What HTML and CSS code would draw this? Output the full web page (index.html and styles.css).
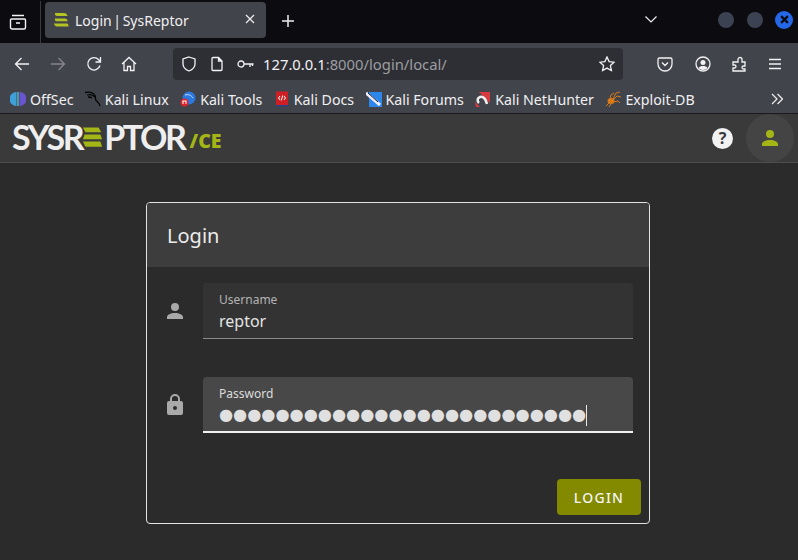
FILE: index.html
```html
<!DOCTYPE html>
<html lang="en">
<head>
    <meta charset="UTF-8">
    <title>Login | SysReptor</title>
    <link rel="stylesheet" href="styles.css">
</head>
<body>
    <div class="tab-strip">
        <svg class="tab-view" viewBox="0 0 18 16" width="18" height="16"><path d="M3 1.500h12M2.500 5h13a1 1 0 0 1 1 1v7.500a1.500 1.500 0 0 1-1.500 1.500H3a1.500 1.500 0 0 1-1.500-1.500V6a1 1 0 0 1 1-1zM7 9h4"/></svg>
        <div class="strip-sep"></div>
        <div class="tab">
            <svg class="tab-icon" viewBox="0 0 16 16" width="16" height="16"><path d="M2 1h9c2 0 3 1 3.500 3H4C3 4 1.500 3 2 1zM2 6.500h10c1.500 0 2.500 1 2.500 2.800H3.500C2.500 9.300 1.500 8 2 6.500zM1 11.500h13c1 0 1.500 1 1.500 3H4c-1.500 0-3-1.500-3-3z"/></svg>
            <span class="tab-title">Login | SysReptor</span>
            <svg class="tab-close" viewBox="0 0 10 10" width="10" height="10"><path d="M1 1l8 8M9 1l-8 8"/></svg>
        </div>
        <svg class="new-tab" viewBox="0 0 12 12" width="12" height="12"><path d="M6 0v12M0 6h12"/></svg>
        <svg class="tab-list" viewBox="0 0 12 7" width="12" height="7"><path d="M.5.500L6 6l5.500-5.500"/></svg>
        <div class="win-btn"></div>
        <div class="win-btn"></div>
        <div class="win-btn win-close"><svg viewBox="0 0 8 8" width="9" height="9"><path d="M1 1l6 6M7 1L1 7"/></svg></div>
    </div>

    <div class="nav-bar">
        <svg class="nav-icon nav-back" viewBox="0 0 16 16" width="16" height="16"><path d="M15 8H1.500M7.500 2l-6 6 6 6"/></svg>
        <svg class="nav-icon nav-forward" viewBox="0 0 16 16" width="16" height="16"><path d="M1 8h13.500M8.500 2l6 6-6 6"/></svg>
        <svg class="nav-icon nav-reload" viewBox="0 0 16 16" width="16" height="16"><path d="M14 9.500A6.200 6.200 0 1 1 12.500 3.500L14.500 6M14.500 1v5h-5"/></svg>
        <svg class="nav-icon nav-home" viewBox="0 0 16 16" width="16" height="16"><path d="M1 8l7-6.500L15 8M3 6.500V14.500h3.500v-4h3v4H13V6.500"/></svg>
        <div class="url-bar">
            <svg class="nav-icon" viewBox="0 0 16 16" width="16" height="16"><path d="M8 1l6 2v5c0 3.500-3 5.800-6 7-3-1.200-6-3.500-6-7V3z"/></svg>
            <svg class="nav-icon url-page" viewBox="0 0 12 16" width="12" height="16"><path d="M1 2.500a1 1 0 0 1 1-1h5.500l3.500 3.500v8.500a1 1 0 0 1-1 1H2a1 1 0 0 1-1-1zM7.500 1.500V5H11"/></svg>
            <svg class="nav-icon url-key" viewBox="0 0 17 10" width="17" height="10"><circle cx="4" cy="5" r="3"/><path d="M7 5h9.500M13 5v3M15.500 5v2"/></svg>
            <span class="url-text">127.0.0.1<span class="url-dim">:8000/login/local/</span></span>
            <svg class="nav-icon url-star" viewBox="0 0 16 16" width="16" height="16"><path d="M8 1l2.100 4.600 5 .6-3.700 3.400 1 5L8 12.100l-4.400 2.500 1-5L.9 6.200l5-.6z"/></svg>
        </div>
        <svg class="nav-icon nav-pocket" viewBox="0 0 16 16" width="16" height="16"><path d="M2.500 2h11A1.500 1.500 0 0 1 15 3.500V8A7 7 0 0 1 1 8V3.500A1.500 1.500 0 0 1 2.500 2zM5 6.500L8 9.500l3-3"/></svg>
        <svg class="nav-icon nav-account" viewBox="0 0 16 16" width="16" height="16"><circle cx="8" cy="8" r="7"/><circle class="icon-fill" cx="8" cy="6.500" r="2.500"/><path class="icon-fill" d="M3.500 12c1-1.500 2.500-2 4.500-2s3.500.5 4.500 2c-1 1.200-2.600 2-4.500 2s-3.500-.8-4.500-2z"/></svg>
        <svg class="nav-icon nav-ext" viewBox="0 0 16 16" width="16" height="16"><path d="M2 6h5V3.500a2 2 0 0 1 4 0V6h3v4h-1.500a1.500 1.500 0 0 0 0 3H14v2H2v-3h1.500a1.500 1.500 0 0 0 0-3H2z"/></svg>
        <svg class="nav-icon nav-menu" viewBox="0 0 14 12" width="14" height="12"><path d="M1 1.500h12M1 6h12M1 10.500h12"/></svg>
    </div>

    <div class="bookmarks">
        <div class="bookmark">
            <svg viewBox="0 0 16 16" width="16" height="16"><path fill="#3f9fd8" d="M6.500 1A7 7 0 0 0 6.500 15z"/><path fill="#6a55d0" d="M9.500 1a7 7 0 0 1 0 14z"/><path fill="#4fc6c8" d="M7.300 1h1.400v14H7.300z"/></svg>
            <span>OffSec</span>
        </div>
        <div class="bookmark">
            <svg viewBox="0 0 16 16" width="16" height="16"><path fill="none" stroke="#050505" stroke-width="1.300" d="M0 1.500c4-1 8 0 10 3 1 2 0 3.500 1 5 1 1 3 2 4 5.500M2 4c3-1 6 0 8 2M3 6c1 0 3 0 4 1"/></svg>
            <span>Kali Linux</span>
        </div>
        <div class="bookmark">
            <svg viewBox="0 0 16 16" width="16" height="16"><circle cx="9" cy="7" r="6.500" fill="#2a78e0"/><path fill="none" stroke="#cfe2fa" d="M5 4c3-1 6 0 8 3"/><circle cx="4.500" cy="11.500" r="4" fill="#d8262c"/><path stroke="#fff" d="M3 10v3M6 10v3M2.500 10h4"/></svg>
            <span>Kali Tools</span>
        </div>
        <div class="bookmark">
            <svg viewBox="0 0 16 16" width="16" height="16"><path fill="#2a3f86" d="M2 13h12v2.500H2z"/><path fill="#cf1f25" d="M2 .5h12V14H2z"/><path fill="none" stroke="#fff" d="M6 5L4.500 7 6 9M10 5l1.500 2L10 9M8.700 4.500L7.300 9.500"/></svg>
            <span>Kali Docs</span>
        </div>
        <div class="bookmark">
            <svg viewBox="0 0 16 16" width="16" height="16"><path fill="#2d86ea" d="M3 1h13v15H3z"/><path fill="none" stroke="#eef" stroke-width="3" d="M0 2l14 12"/><path fill="none" stroke="#222" d="M2 2l10 9"/></svg>
            <span>Kali Forums</span>
        </div>
        <div class="bookmark">
            <svg viewBox="0 0 16 16" width="16" height="16"><path fill="#d93a40" d="M4 1h11v11z"/><path fill="#d93a40" d="M0 11l5 5H1z"/><path fill="none" stroke="#eee" stroke-width="2.500" d="M12 13C11 8 8 5 5 6c-3 1-3 4-1 6"/></svg>
            <span>Kali NetHunter</span>
        </div>
        <div class="bookmark">
            <svg viewBox="0 0 16 16" width="16" height="16"><ellipse cx="6" cy="10" rx="3.500" ry="3" fill="#d87a18"/><path fill="none" stroke="#d87a18" d="M8 8l3-6 4-1M8 9l4-4 4 1M8 11l5-1 2 2M5 7l1-3 3-2M4 12l-3 3M6 13l-2 3"/></svg>
            <span>Exploit-DB</span>
        </div>
        <svg class="bookmark-more" viewBox="0 0 12 12" width="12" height="12"><path d="M1 1l5 5-5 5M6.500 1l5 5-5 5"/></svg>
    </div>

    <header class="app-bar">
        <div class="logo">
            <span>SYSR</span>
            <svg class="logo-e" viewBox="0 0 24 24" width="21" height="24"><path d="M1 1h18l3 5.500H4zM3 9h18l2 5.500H1zM1 17h20l2 6H4z"/></svg>
            <span>PTOR</span>
            <span class="logo-ce">/CE</span>
        </div>
        <div class="help-icon">?</div>
        <div class="user-btn">
            <svg viewBox="0 0 24 24" width="24" height="24"><path d="M12 4a4 4 0 1 1 0 8 4 4 0 0 1 0-8zm0 10c4.400 0 8 1.800 8 4v2H4v-2c0-2.200 3.600-4 8-4z"/></svg>
        </div>
    </header>

    <main class="page">
        <div class="card">
            <div class="card-title">Login</div>
            <div class="card-body">
                <div class="field-row">
                    <svg class="field-icon" viewBox="0 0 24 24" width="24" height="24"><path d="M12 4a4 4 0 1 1 0 8 4 4 0 0 1 0-8zm0 10c4.400 0 8 1.800 8 4v2H4v-2c0-2.200 3.600-4 8-4z"/></svg>
                    <div class="field">
                        <div class="field-label">Username</div>
                        <div class="field-value">reptor</div>
                    </div>
                </div>
                <div class="field-row">
                    <svg class="field-icon" viewBox="0 0 24 24" width="24" height="24"><path d="M12 17a2 2 0 1 0 0-4 2 2 0 0 0 0 4zm6-9a2 2 0 0 1 2 2v10a2 2 0 0 1-2 2H6a2 2 0 0 1-2-2V10a2 2 0 0 1 2-2h1V6a5 5 0 0 1 10 0v2h1zM12 3a3 3 0 0 0-3 3v2h6V6a3 3 0 0 0-3-3z"/></svg>
                    <div class="field field-focused">
                        <div class="field-label">Password</div>
                        <div class="field-dots">●●●●●●●●●●●●●●●●●●●●●●●●●●<span class="caret"></span></div>
                    </div>
                </div>
            </div>
            <div class="card-actions">
                <button class="login-btn">LOGIN</button>
            </div>
        </div>
    </main>
</body>
</html>
```

FILE: styles.css
```css
html, body {
    margin: 0;
    height: 100%;
}
body {
    width: 798px;
    height: 560px;
    overflow: hidden;
    display: flex;
    flex-direction: column;
    background: #2b2b2b;
    font-family: "Noto Sans", sans-serif;
    color: #e6e6e6;
}
svg {
    flex: none;
    display: block;
}

/* browser chrome */
.tab-strip {
    height: 43px;
    flex: none;
    display: flex;
    align-items: center;
    background: #0c0c10;
    box-sizing: border-box;
    padding-left: 9px;
}
.tab-view path {
    fill: none;
    stroke: #f4f4f5;
    stroke-width: 1.4;
}
.strip-sep {
    width: 1px;
    height: 42px;
    background: #3a3a40;
    margin-left: 13px;
    margin-right: 4px;
}
.tab {
    width: 221px;
    height: 36px;
    margin-top: -3px;
    box-sizing: border-box;
    padding: 0 12px 0 8px;
    border-radius: 4px;
    background: #42444b;
    display: flex;
    align-items: center;
    font-size: 14px;
    word-spacing: -2px;
    color: #f0f0f2;
}
.tab-icon {
    margin-right: 6px;
}
.tab-icon path {
    fill: #b3c322;
}
.tab-title {
    flex: 1;
}
.tab-close path, .new-tab path, .tab-list path {
    fill: none;
    stroke: #eeeef0;
    stroke-width: 1.2;
}
.tab-close {
    margin-right: -1px;
    margin-top: -2px;
}
.new-tab {
    margin-left: 16px;
    margin-top: -1px;
}
.new-tab path {
    stroke-width: 1.5;
}
.tab-list {
    margin-left: 351px;
    margin-top: -4px;
}
.win-btn {
    width: 16px;
    height: 16px;
    border-radius: 50%;
    background: #3b4252;
    margin-left: 13px;
    margin-top: -4px;
    display: flex;
    align-items: center;
    justify-content: center;
}
.tab-list + .win-btn {
    margin-left: 61px;
}
.win-close {
    background: #2468e8;
    width: 18px;
    height: 18px;
    margin-left: 12px;
}
.win-close path {
    fill: none;
    stroke: #0c0c10;
    stroke-width: 2;
}

.nav-bar {
    height: 42px;
    flex: none;
    display: flex;
    align-items: center;
    background: #42444b;
    padding-left: 14px;
    box-sizing: border-box;
}
.nav-icon path, .nav-icon circle {
    fill: none;
    stroke: #f2f2f4;
    stroke-width: 1.3;
}
.nav-icon .icon-fill {
    fill: #f2f2f4;
    stroke: none;
}
.nav-forward {
    margin-left: 20px;
}
.nav-forward path {
    stroke: #85878c;
}
.nav-reload {
    margin-left: 20px;
}
.nav-home {
    margin-left: 19px;
}
.url-bar {
    width: 450px;
    height: 32px;
    margin-left: 36px;
    box-sizing: border-box;
    padding: 0 8px;
    border-radius: 4px;
    background: #2e2f34;
    display: flex;
    align-items: center;
    font-size: 14.8px;
}
.url-page {
    margin-left: 14px;
}
.url-key {
    margin-left: 14px;
}
.url-text {
    margin-left: 9px;
    flex: 1;
    color: #f2f2f4;
}
.url-dim {
    color: #9c9da1;
}
.nav-pocket {
    margin-left: 34px;
}
.nav-account {
    margin-left: 22px;
}
.nav-ext {
    margin-left: 20px;
}
.nav-menu {
    margin-left: 21px;
}

.bookmarks {
    height: 29px;
    flex: none;
    display: flex;
    align-items: center;
    background: #42444b;
    padding-left: 10px;
    box-sizing: border-box;
    border-bottom: 1px solid #1a1a1e;
    font-size: 14.2px;
    color: #f0f0f2;
}
.bookmark {
    display: flex;
    align-items: center;
    gap: 4px;
    margin-right: 11.4px;
}
.bookmark-more {
    margin-left: 65px;
}
.bookmark-more path {
    fill: none;
    stroke: #e8e8ea;
    stroke-width: 1.3;
}

/* app */
.app-bar {
    height: 49px;
    flex: none;
    box-sizing: border-box;
    display: flex;
    align-items: center;
    background: #3a3a3a;
    border-bottom: 1px solid #4e4e4e;
    padding-left: 12px;
    padding-right: 4px;
}
.logo {
    flex: 1;
    display: flex;
    align-items: center;
    font-family: "Lato", sans-serif;
    font-size: 34px;
    font-weight: 700;
    line-height: 1;
    letter-spacing: -2.4px;
    color: #eeeeee;
    margin-top: -3px;
}
.logo-e {
    margin: 0 1px 0 0;
}
.logo-e path {
    fill: #a3b615;
}
.logo-ce {
    font-size: 19.5px;
    font-weight: 900;
    font-family: "Noto Sans", sans-serif;
    color: #a3b615;
    letter-spacing: 0;
    margin-left: 5px;
    margin-top: 8px;
}
.help-icon {
    width: 21px;
    height: 21px;
    border-radius: 50%;
    background: #f2f2f2;
    color: #3a3a3a;
    font-size: 16px;
    font-weight: 700;
    line-height: 21px;
    text-align: center;
    margin-right: 13px;
}
.user-btn {
    width: 48px;
    height: 48px;
    border-radius: 50%;
    background: #444444;
    display: flex;
    align-items: center;
    justify-content: center;
}
.user-btn path {
    fill: #a3b615;
}

.page {
    flex: 1;
    padding-top: 39px;
    padding-left: 146px;
}
.card {
    width: 504px;
    height: 322px;
    box-sizing: border-box;
    border: 1px solid #e4e4e4;
    border-radius: 4px;
    overflow: hidden;
    display: flex;
    flex-direction: column;
}
.card-title {
    height: 64px;
    flex: none;
    box-sizing: border-box;
    padding-left: 20px;
    background: #3d3d3d;
    font-size: 20px;
    line-height: 66px;
    color: #ececec;
}
.card-body {
    padding: 16px 16px 0 16px;
    display: flex;
    flex-direction: column;
    gap: 38px;
}
.field-row {
    display: flex;
    align-items: center;
    gap: 16px;
}
.field-icon path {
    fill: #a9a9a9;
}
.field {
    flex: 1;
    min-width: 0;
    height: 56px;
    box-sizing: border-box;
    padding: 9px 16px 0;
    background: #333333;
    border-radius: 4px 4px 0 0;
    border-bottom: 1px solid #8b8b8b;
}
.field-focused {
    background: #484848;
    border-bottom: 2px solid #f0f0f0;
}
.field-label {
    font-size: 12px;
    line-height: 16px;
    color: #b4b4b4;
}
.field-focused .field-label {
    color: #dcdcdc;
}
.field-value {
    font-size: 16px;
    line-height: 24px;
    margin-top: 1px;
    color: #e4e4e4;
}
.field-dots {
    font-family: "DejaVu Sans", sans-serif;
    font-size: 16.2px;
    line-height: 24px;
    margin-top: 1px;
    color: #e0e0e0;
    display: flex;
    align-items: center;
    white-space: nowrap;
}
.caret {
    width: 1px;
    height: 21px;
    background: #e8e8e8;
}
.card-actions {
    flex: 1;
    display: flex;
    justify-content: flex-end;
    align-items: flex-end;
    padding: 0 8px 8px 0;
}
.login-btn {
    width: 84px;
    height: 36px;
    border: none;
    border-radius: 4px;
    background: #838a00;
    color: #f4f4f4;
    font-family: "Noto Sans", sans-serif;
    font-size: 14px;
    font-weight: 500;
    letter-spacing: 1.25px;
}
```
